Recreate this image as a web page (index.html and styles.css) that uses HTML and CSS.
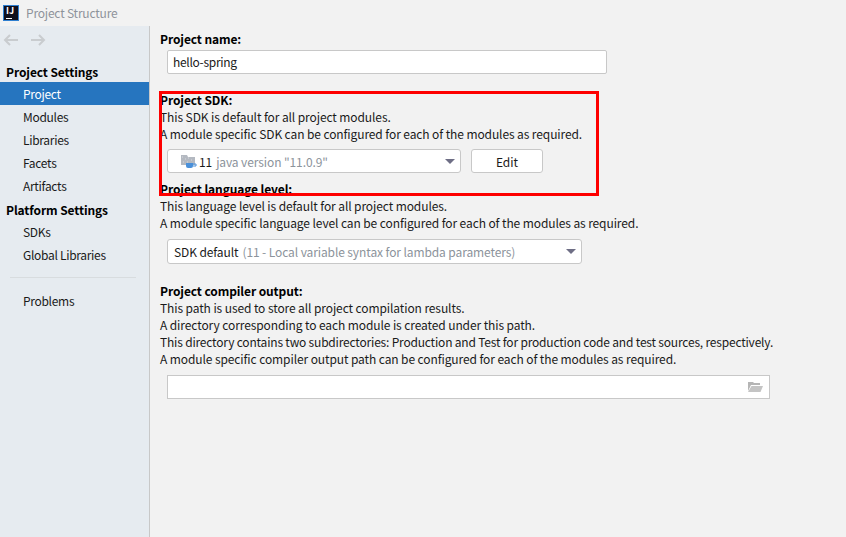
FILE: index.html
```html
<!DOCTYPE html>
<html lang="en">
<head>
    <meta charset="UTF-8">
    <meta name="viewport" content="width=device-width, initial-scale=1.0">
    <title>Project Structure</title>
    <link rel="stylesheet" href="styles.css">
</head>
<body>

    <div class="titlebar">
        <div class="app-logo"><span class="app-logo-text">IJ</span><span class="app-logo-bar"></span></div>
        <span class="title-text">Project Structure</span>
    </div>

    <div class="window">
        <div class="sidebar">
            <div class="history">
                <svg width="16" height="14" viewBox="0 0 16 14"><path d="M15 7H2M7 2L2 7l5 5" fill="none" stroke="#c9cccf" stroke-width="2"/></svg>
                <svg width="16" height="14" viewBox="0 0 16 14"><path d="M1 7h13M9 2l5 5-5 5" fill="none" stroke="#c9cccf" stroke-width="2"/></svg>
            </div>
            <div class="side-heading">Project Settings</div>
            <div class="side-item selected">Project</div>
            <div class="side-item">Modules</div>
            <div class="side-item">Libraries</div>
            <div class="side-item">Facets</div>
            <div class="side-item">Artifacts</div>
            <div class="side-heading side-heading-next">Platform Settings</div>
            <div class="side-item">SDKs</div>
            <div class="side-item">Global Libraries</div>
            <div class="side-separator"></div>
            <div class="side-item">Problems</div>
        </div>

        <div class="content">
            <div class="section section-name">
                <label class="section-title">Project name:</label>
                <input type="text" class="input-field input-name" value="hello-spring">
            </div>

            <div class="section section-sdk">
                <div class="section-title">Project SDK:</div>
                <div class="section-line">This SDK is default for all project modules.</div>
                <div class="section-line">A module specific SDK can be configured for each of the modules as required.</div>
                <div class="control-row">
                    <div class="combo combo-sdk">
                        <svg class="sdk-icon" width="16" height="15" viewBox="0 0 16 15">
                            <path d="M0 1h6l1 2h7v8H0z" fill="#b4b9c1"/>
                            <path d="M1 3h1M4 5h1M7 4h1M10 6h1M2 8h1M6 8h1" stroke="#d8dbe0" stroke-width="1"/>
                            <path d="M5 9h7v3a2 2 0 0 1-2 2H7a2 2 0 0 1-2-2z" fill="#4a90d9"/>
                            <path d="M12 10h3v2h-3" fill="none" stroke="#4a90d9"/>
                        </svg>
                        <span class="combo-text">11</span>
                        <span class="combo-hint">java version "11.0.9"</span>
                        <span class="combo-arrow"></span>
                    </div>
                    <button class="edit-button">Edit</button>
                </div>
            </div>

            <div class="section section-level">
                <div class="section-title">Project language level:</div>
                <div class="section-line">This language level is default for all project modules.</div>
                <div class="section-line">A module specific language level can be configured for each of the modules as required.</div>
                <div class="combo combo-level">
                    <span class="combo-text">SDK default</span>
                    <span class="combo-hint">(11 - Local variable syntax for lambda parameters)</span>
                    <span class="combo-arrow"></span>
                </div>
            </div>

            <div class="section section-output">
                <div class="section-title">Project compiler output:</div>
                <div class="section-line">This path is used to store all project compilation results.</div>
                <div class="section-line">A directory corresponding to each module is created under this path.</div>
                <div class="section-line section-line-long">This directory contains two subdirectories: Production and Test for production code and test sources, respectively.</div>
                <div class="section-line">A module specific compiler output path can be configured for each of the modules as required.</div>
                <div class="path-field">
                    <svg width="15" height="12" viewBox="0 0 15 12"><path d="M0 1h5l1 1h6v2H3L0 10z" fill="#b5b5b5"/><path d="M3.500 5H15l-2.500 6H0z" fill="#c4c4c4"/></svg>
                </div>
            </div>
        </div>
    </div>

    <div class="highlight-box"></div>

</body>
</html>
```

FILE: styles.css
```css
body {
    margin: 0;
    padding: 0;
    height: 537px;
    overflow: hidden;
    font-family: 'Noto Sans CJK KR', 'Noto Sans', sans-serif;
    font-size: 12px;
    line-height: 17px;
    color: #1a1a1a;
    background-color: #f2f2f2;
    position: relative;
}

.titlebar {
    display: flex;
    align-items: center;
    height: 26px;
    padding-left: 3px;
    box-sizing: border-box;
}
.app-logo {
    width: 16px;
    height: 16px;
    box-sizing: border-box;
    background-color: #0f0f1c;
    border: 1px solid #2f7fd0;
    margin-right: 7px;
    position: relative;
}
.app-logo-text {
    position: absolute;
    left: 2px;
    top: -1px;
    font-size: 9px;
    line-height: 11px;
    font-weight: bold;
    color: #fff;
}
.app-logo-bar {
    position: absolute;
    left: 2px;
    bottom: 1px;
    width: 6px;
    height: 1px;
    background-color: #fff;
}
.title-text {
    color: #8e939b;
    letter-spacing: -0.2px;
    padding-bottom: 1px;
}

.window {
    display: flex;
    height: 511px;
}

.sidebar {
    width: 150px;
    flex: none;
    box-sizing: border-box;
    background-color: #e6ebf0;
    border-right: 1px solid #c8c8c8;
}
.history {
    display: flex;
    gap: 11px;
    height: 29px;
    padding: 7px 0 0 3px;
    box-sizing: border-box;
}
.side-heading {
    font-weight: bold;
    padding: 8px 0 0 6px;
    height: 27px;
    box-sizing: border-box;
    color: #000;
    letter-spacing: -0.1px;
}
.side-heading-next {
    padding-top: 4px;
    height: 23px;
}
.side-item {
    height: 23px;
    line-height: 23px;
    padding-left: 23px;
    letter-spacing: -0.3px;
}
.side-item.selected {
    background-color: #2675bf;
    color: #fff;
}
.side-separator {
    height: 1px;
    margin: 11px 13px 11px 10px;
    background-color: #d8dcdf;
}

.content {
    flex: 1;
    padding: 4px 0 0 10px;
    letter-spacing: -0.1px;
}
.section-title {
    display: block;
    font-weight: bold;
    color: #000;
}
.section-line {
    height: 17px;
    white-space: nowrap;
}
.section-line-long {
    letter-spacing: -0.19px;
}
.section-sdk {
    margin-top: 17px;
}
.section-level {
    margin-top: 7px;
}
.section-output {
    margin-top: 18px;
}

.input-field {
    display: block;
    box-sizing: border-box;
    font-family: 'Noto Sans CJK KR', 'Noto Sans', sans-serif;
    font-size: 12px;
    color: #1a1a1a;
    background-color: #fff;
    border: 1px solid #c8c8c8;
    border-radius: 2px;
    padding: 0 5px 2px;
    outline: none;
    letter-spacing: -0.3px;
}
.input-name {
    width: 440px;
    height: 24px;
    margin: 3px 0 0 7px;
}

.control-row {
    display: flex;
    align-items: center;
    gap: 10px;
    margin: 7px 0 0 7px;
}
.combo {
    display: flex;
    align-items: center;
    box-sizing: border-box;
    background-color: #fff;
    border: 1px solid #c8c8c8;
    border-radius: 3px;
    padding: 0 5px 0 6px;
    white-space: nowrap;
}
.combo-sdk {
    width: 294px;
    height: 24px;
    padding-left: 13px;
}
.combo-level {
    width: 415px;
    height: 25px;
    margin: 8px 0 0 7px;
}
.sdk-icon {
    margin-right: 2px;
}
.combo-text {
    margin-right: 4px;
}
.combo-hint {
    color: #8c939b;
}
.combo-arrow {
    margin-left: auto;
    width: 0;
    height: 0;
    border-left: 5px solid transparent;
    border-right: 5px solid transparent;
    border-top: 5px solid #6e6e85;
}
.edit-button {
    width: 72px;
    height: 24px;
    box-sizing: border-box;
    background-color: #fff;
    border: 1px solid #c8c8c8;
    border-radius: 3px;
    font-family: 'Noto Sans CJK KR', 'Noto Sans', sans-serif;
    font-size: 12px;
    color: #1a1a1a;
    padding: 0;
}

.path-field {
    display: flex;
    align-items: center;
    justify-content: flex-end;
    box-sizing: border-box;
    width: 603px;
    height: 24px;
    margin: 8px 0 0 7px;
    padding-right: 6px;
    background-color: #fff;
    border: 1px solid #c8c8c8;
}

/* red marker drawn over the screenshot */
.highlight-box {
    position: absolute;
    left: 159px;
    top: 91px;
    width: 440px;
    height: 105px;
    box-sizing: border-box;
    border: 3px solid #fe0000;
}
```
